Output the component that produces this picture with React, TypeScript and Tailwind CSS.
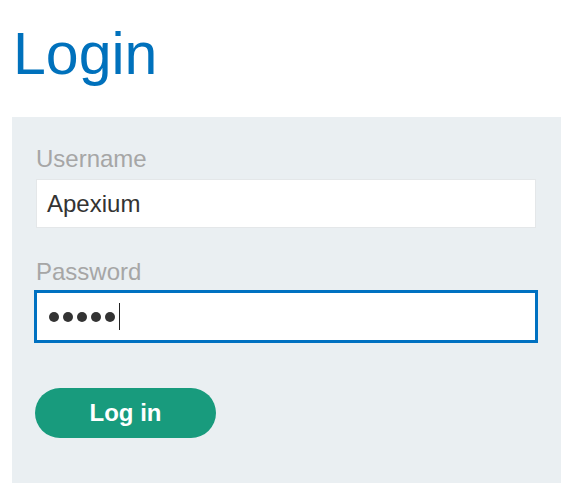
import React from 'react'

const font = { fontFamily: '"Liberation Sans", Arial, sans-serif' }

const App: React.FC = () => {
  return (
    <div className="min-h-[483px] bg-white overflow-hidden" style={font}>
      <h1 className="ml-[13px] mt-[18px] mb-[27px] text-[59px] leading-[72px] text-[#0071bc] font-normal">Login</h1>

      <section className="ml-[12px] bg-[#eaeff2] pl-6 pr-[25px] pt-[28px] pb-[50px]">
        <label className="block text-[24px] leading-[28px] text-[#a6a6a6] mb-[6px]">Username</label>
        <div className="h-[49px] bg-white border border-[#e4e7e9] flex items-center pl-[10px] text-[24px] text-[#333333]">
          Apexium
        </div>

        <label className="block mt-[30px] text-[24px] leading-[28px] text-[#a6a6a6] mb-[6px]">Password</label>
        <div className="h-[49px] bg-white border border-[#0071c1] ring-2 ring-[#0071c1] flex items-center pl-[10px]">
          <div className="ml-[2px] flex items-center gap-[4px]">
            {[0, 1, 2, 3, 4].map((i) => (
              <span key={i} className="w-[10px] h-[10px] rounded-full bg-[#333333]" />
            ))}
          </div>
          <span className="ml-[4px] w-[1px] h-[27px] bg-[#222222]" />
        </div>

        <button className="mt-[47px] ml-[-1px] w-[181px] h-[50px] rounded-full bg-[#189b7d] text-white text-[24px] font-bold">
          Log in
        </button>
      </section>
    </div>
  )
}

export default App
